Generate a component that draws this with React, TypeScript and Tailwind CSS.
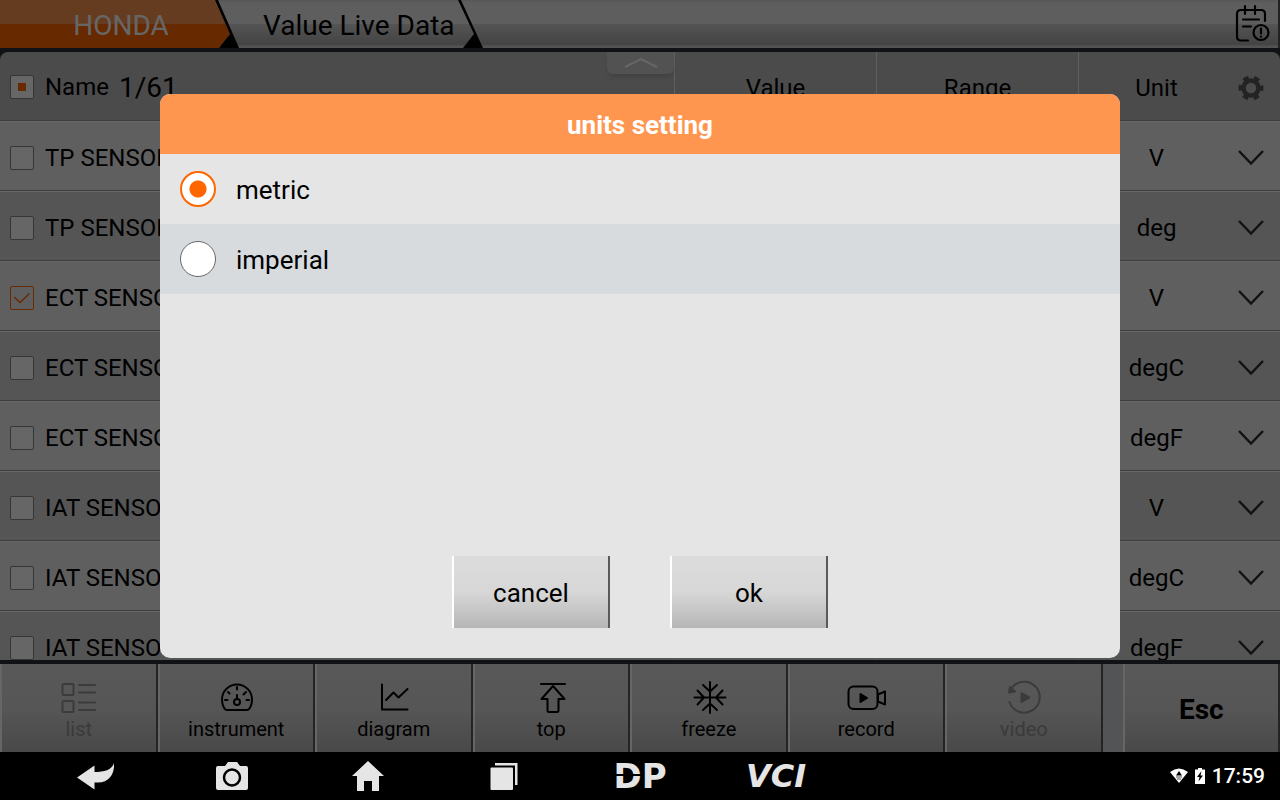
import React, { useState } from 'react'

function classNames(...classes: string[]): string {
    return classes.filter(Boolean).join(' ')
}

const rows = [
    { name: 'TP SENSOR', unit: 'V', checked: false },
    { name: 'TP SENSOR', unit: 'deg', checked: false },
    { name: 'ECT SENSOR', unit: 'V', checked: true },
    { name: 'ECT SENSOR', unit: 'degC', checked: false },
    { name: 'ECT SENSOR', unit: 'degF', checked: false },
    { name: 'IAT SENSOR', unit: 'V', checked: false },
    { name: 'IAT SENSOR', unit: 'degC', checked: false },
    { name: 'IAT SENSOR', unit: 'degF', checked: false },
]

const tools = [
    {
        name: 'list',
        disabled: true,
        icon: (
            <>
                <rect x="3.5" y="4" width="11" height="11" rx="1" />
                <rect x="3.5" y="21" width="11" height="11" rx="1" />
                <path d="M20 5h16M20 12.5h16M20 22.5h16M20 30h16" />
            </>
        ),
    },
    {
        name: 'instrument',
        disabled: false,
        icon: (
            <>
                <path d="M11 30h20c2.5 0 5-5 5-10.5a15 15 0 0 0-30 0c0 5.5 2.500 10.5 5 10.5Z" />
                <circle cx="21" cy="22" r="3" />
                <path d="M21 19v-4M21 7v2.500M9 20h2.500M30.500 20h2.500M12 12l1.500 1.500M30 12l-2.500 2.500" />
            </>
        ),
    },
    {
        name: 'diagram',
        disabled: false,
        icon: <path d="M8 4.5v25h25.500M12 20l7.500-7.500 5 5 9-8.500" />,
    },
    {
        name: 'top',
        disabled: false,
        icon: <path d="M10 4h24M22 6L10.500 19h6v11.500q0 1.500 1.500 1.500h8q1.500 0 1.500-1.500V19h6Z" />,
    },
    {
        name: 'freeze',
        disabled: false,
        icon: <path d="M21 2v31M5.500 17.500h31M14 5l7 6.500 7-6.500M14 30l7-6.500 7 6.500M8.500 10.500l6.500 7-6.500 7M33.500 10.500l-6.500 7 6.500 7" />,
    },
    {
        name: 'record',
        disabled: false,
        icon: (
            <>
                <rect x="2.500" y="6.500" width="29" height="22.500" rx="5" />
                <path d="M32 14.500l7-3v13l-7-3Z" />
                <path d="M14.500 14v8l6.500-4Z" fill="currentColor" />
            </>
        ),
    },
    {
        name: 'video',
        disabled: true,
        icon: (
            <>
                <path d="M6.500 10A15.500 15.500 0 1 1 5.500 22" />
                <path d="M6 7l-1 5.500 6-1Z" fill="currentColor" />
                <path d="M17.500 13v9l8-4.500Z" fill="currentColor" />
            </>
        ),
    },
]

const buttonFace =
    'border-l-2 border-r-2 border-l-white border-r-[#5a5a5a] bg-linear-to-b from-[#dcdcdc] via-[#d7d7d7] to-[#b6b6b6]'

interface CheckProps {
    label: string
    state: 'on' | 'off' | 'some'
    onChange: () => void
}

function Check({ label, state, onChange }: CheckProps) {
    return (
        <span className="relative block size-6 shrink-0">
            <input
                type="checkbox"
                aria-label={label}
                checked={state !== 'off'}
                onChange={onChange}
                className={classNames(
                    'block size-6 appearance-none rounded-xs border',
                    state === 'on' ? 'border-[#ff6600] bg-transparent' : 'border-[#858585] bg-white'
                )}
            />
            {state === 'on' && (
                <svg viewBox="0 0 24 24" className="pointer-events-none absolute inset-0 size-6" fill="none" stroke="#ff6600" strokeWidth="1.5">
                    <path d="M4 11l6 5.5 9.500-9" />
                </svg>
            )}
            {state === 'some' && <span className="pointer-events-none absolute inset-2 bg-[#ff6600]" />}
        </span>
    )
}

function TopBar() {
    return (
        <header className="flex h-12 shrink-0 items-stretch border-r-2 border-r-[#555555] bg-[linear-gradient(to_bottom,#d8d8d8_0,#ececec_8%,#ececec_50%,#d2d2d2_50%,#aaaaaa_92%,#d0d0d0_97%)]">
            <button
                type="button"
                className="w-[214px] bg-[linear-gradient(to_bottom,#ff9650_50%,#ff6600_50%)] pt-1 pl-7 text-[28px] text-white"
            >
                HONDA
            </button>
            <svg viewBox="0 0 26 48" className="h-12 w-[26px]">
                <path d="M0 0h1l11 24H0Z" fill="#ff9650" />
                <path d="M0 24h12l4 10L5 48H0Z" fill="#ff6600" />
                <path d="M1 0h3l21 48H5l11-14Z" />
            </svg>
            <button type="button" className="w-[218px] pt-1 pl-[23px] text-left text-[28px] whitespace-nowrap">
                Value Live Data
            </button>
            <svg viewBox="0 0 26 48" className="h-12 w-[26px]">
                <path d="M0 0h3l22 48H5l11-14Z" />
            </svg>
            <button type="button" aria-label="Report" className="ml-auto pr-2">
                <svg viewBox="0 0 38 40" className="h-10 w-[38px]" fill="none" stroke="#000" strokeWidth="2.2" strokeLinecap="round">
                    <path d="M16 36.500H9q-4 0-4-4V10q0-4 4-4h20q4 0 4 4v7M13 2v8M23 2v8M11 15.500h16M11 22.500h8" />
                    <circle cx="29" cy="28.500" r="7.500" />
                    <path d="M29 24.500v5M29 32.500v0.200" />
                </svg>
            </button>
        </header>
    )
}

function DataTable() {
    const [checked, setChecked] = useState(rows.map((row) => row.checked))
    const count = checked.filter(Boolean).length

    function toggle(index: number) {
        setChecked(checked.map((value, i) => (i === index ? !value : value)))
    }

    const split = 'border-l border-l-[#eeeeee]'

    return (
        <main className="relative min-h-0 flex-1 overflow-hidden rounded-t-lg bg-[#bcbcbc]">
            <table className="w-full table-fixed border-separate border-spacing-0 text-2xl">
                <thead>
                    <tr className="h-[69px] *:border-b *:border-b-[#999999] *:p-0 *:pt-[3px] *:font-normal">
                        <th scope="col" className="text-left">
                            <div className="flex items-center pl-[10px]">
                                <Check
                                    label="Select all"
                                    state={count > 0 ? 'some' : 'off'}
                                    onChange={() => setChecked(rows.map(() => count === 0))}
                                />
                                <span className="pl-[11px]">Name</span>
                                <span className="pl-[10px] text-[28px]">{count}/61</span>
                            </div>
                        </th>
                        <th scope="col" className={classNames('w-[202px]', split)}>Value</th>
                        <th scope="col" className={classNames('w-[202px]', split)}>Range</th>
                        <th scope="col" className={classNames('w-[202px]', split)}>
                            <div className="flex items-center gap-1 pr-4">
                                <span className="flex-1">Unit</span>
                                <button type="button" aria-label="Settings">
                                    <svg viewBox="0 0 26 26" className="block size-[26px]" fill="none" stroke="#585858">
                                        <circle cx="13" cy="13" r="7.5" strokeWidth="4.5" />
                                        <circle cx="13" cy="13" r="10.5" strokeWidth="4" strokeDasharray="5.498 5.498" strokeDashoffset="2.749" />
                                    </svg>
                                </button>
                            </div>
                        </th>
                    </tr>
                </thead>
                <tbody>
                    {rows.map((row, index) => (
                        <tr
                            key={index}
                            className="h-[70px] odd:bg-[#eeeeee] even:bg-[#d5d5d5] *:border-t *:border-b *:border-t-white *:border-b-[#999999] *:p-0 *:pt-[3px]"
                        >
                            <td>
                                <div className="flex items-center pl-[10px]">
                                    <Check label={row.name} state={checked[index] ? 'on' : 'off'} onChange={() => toggle(index)} />
                                    <span className="pl-[11px]">{row.name}</span>
                                </div>
                            </td>
                            <td className={split} />
                            <td className={split} />
                            <td className={split}>
                                <div className="flex items-center gap-1 pr-4 text-center">
                                    <span className="flex-1">{row.unit}</span>
                                    <button type="button" aria-label="Change unit">
                                        <svg viewBox="0 0 26 26" className="block size-[26px]" fill="none" stroke="#332c2c" strokeWidth="2.5">
                                            <path d="M1 6l12 12.500L25 6" />
                                        </svg>
                                    </button>
                                </div>
                            </td>
                        </tr>
                    ))}
                </tbody>
            </table>
            <button
                type="button"
                aria-label="Collapse"
                className="absolute top-0 right-[606px] flex h-[22px] w-[67px] items-center justify-center rounded-b-md bg-[#cccccc] shadow-md"
            >
                <svg viewBox="0 0 34 12" className="h-3 w-[34px]" fill="none" stroke="#fff" strokeWidth="2">
                    <path d="M1 10L17 2l16 8" />
                </svg>
            </button>
        </main>
    )
}

function Toolbar() {
    return (
        <div className="flex h-[88px] shrink-0 bg-[#d0d2d5]">
            {tools.map((tool) => (
                <button
                    key={tool.name}
                    type="button"
                    disabled={tool.disabled}
                    className={classNames(
                        'flex flex-1 flex-col items-center pt-4 text-xl',
                        buttonFace,
                        tool.disabled ? 'text-[#939393]' : 'text-black'
                    )}
                >
                    <svg
                        viewBox="0 0 40 36"
                        className="h-9 w-10"
                        fill="none"
                        stroke="currentColor"
                        strokeWidth="2"
                        strokeLinecap="round"
                        strokeLinejoin="round"
                    >
                        {tool.icon}
                    </svg>
                    <span className="leading-[26px]">{tool.name}</span>
                </button>
            ))}
            <div className="w-5" />
            <button type="button" className={classNames('flex-1 pt-1 text-[28px] font-bold', buttonFace)}>
                Esc
            </button>
        </div>
    )
}

function UnitsDialog() {
    const [unit, setUnit] = useState('metric')

    return (
        <div className="absolute inset-0 flex items-center justify-center bg-black/60">
            <div
                role="dialog"
                aria-labelledby="units-title"
                className="flex w-3/4 flex-col overflow-hidden rounded-[10px] bg-[#e5e5e5] text-[26px]"
            >
                <h2 id="units-title" className="bg-[#ff9650] pt-[13px] pb-[11px] text-center leading-9 font-bold text-white">
                    units setting
                </h2>
                <div className="min-h-[402px]">
                    {['metric', 'imperial'].map((name) => (
                        <label key={name} className="flex h-[70px] items-center gap-5 px-5 even:bg-[#d7dbde]">
                            <input
                                type="radio"
                                name="unit"
                                checked={unit === name}
                                onChange={() => setUnit(name)}
                                className="size-9 appearance-none rounded-full border border-[#666666] bg-white checked:border-2 checked:border-[#ff6600] checked:bg-[radial-gradient(circle,#ff6600_8px,#ffffff_9px)]"
                            />
                            <span className="pt-[2px]">{name}</span>
                        </label>
                    ))}
                </div>
                <div className="flex justify-center gap-[60px] pb-[30px]">
                    <button type="button" className={classNames('h-[72px] w-[158px] pt-[2px]', buttonFace)}>cancel</button>
                    <button type="button" className={classNames('h-[72px] w-[158px] pt-[2px]', buttonFace)}>ok</button>
                </div>
            </div>
        </div>
    )
}

function SystemBar() {
    const slot = 'flex w-[136px] items-center justify-center'

    return (
        <nav className="flex h-12 shrink-0 bg-black pl-7 text-[#e5e5e5]">
            <button type="button" aria-label="Back" className={slot}>
                <svg viewBox="0 0 38 28" className="h-7 w-[38px]" fill="currentColor">
                    <path d="M0 15.500L17.500 3.500V10C27 10 35 8 37 1c1 12-6 19.500-16 19.500h-3.500v7Z" />
                </svg>
            </button>
            <button type="button" aria-label="Screenshot" className={slot}>
                <svg viewBox="0 0 32 28" className="h-7 w-8" fill="currentColor">
                    <path d="M2 4h7l3-4h9l3 4h6q2 0 2 2v20q0 2-2 2H2q-2 0-2-2V6q0-2 2-2Z" />
                    <circle cx="16" cy="15.500" r="8" fill="none" stroke="#000" strokeWidth="2.500" />
                </svg>
            </button>
            <button type="button" aria-label="Home" className={slot}>
                <svg viewBox="0 0 32 30" className="h-[30px] w-8" fill="currentColor">
                    <path d="M16 0l16 15h-5v15h-7V20h-8v10H5V15H0Z" />
                </svg>
            </button>
            <button type="button" aria-label="Recent apps" className={slot}>
                <svg viewBox="0 0 28 28" className="size-7" fill="currentColor">
                    <rect x="0.500" y="5.500" width="22.500" height="22.500" rx="1" />
                    <path d="M5 1h22.500v22h-2.500V3.500H5Z" />
                </svg>
            </button>
            <button type="button" className={classNames(slot, 'relative font-[DejaVu_Sans] text-[34px] leading-none font-bold')}>
                DP
                <span className="absolute top-[22px] left-10 h-[2px] w-8 bg-black" />
            </button>
            <button type="button" className={classNames(slot, 'font-[DejaVu_Sans] text-[32px] leading-none font-bold italic')}>
                VCI
            </button>
            <div className="ml-auto flex items-center gap-[7px] pr-[15px] text-white">
                <svg viewBox="0 0 18 16" className="h-4 w-[18px]" fill="currentColor">
                    <path d="M0 4Q9-3 18 4L9 15Z" />
                    <path d="M9 3l3 4.500H6Z" fill="#000" />
                    <path d="M6 9h6M7 11h4" stroke="#555" />
                </svg>
                <svg viewBox="0 0 10 16" className="h-4 w-[10px]" fill="currentColor">
                    <path d="M0 1.500h3V0h4v1.500h3V16H0Z" />
                    <path d="M6.500 3L2 9h2.500L3.500 13.500 8 7.500H5.500Z" fill="#000" />
                </svg>
                <time className="pt-[2px] text-[21px] font-medium">17:59</time>
            </div>
        </nav>
    )
}

export default function App() {
    return (
        <div className="flex h-screen flex-col font-[Roboto,sans-serif] text-black">
            <div className="relative flex min-h-0 flex-1 flex-col gap-1 bg-[#2b2d38]">
                <TopBar />
                <DataTable />
                <Toolbar />
                <UnitsDialog />
            </div>
            <SystemBar />
        </div>
    )
}
